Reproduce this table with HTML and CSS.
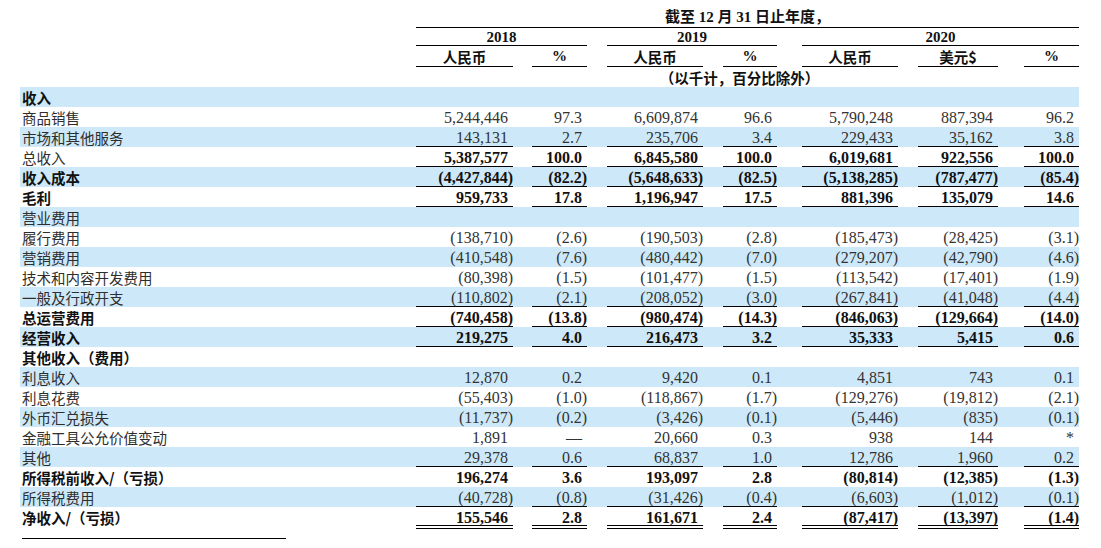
FILE: index.html
```html
<!DOCTYPE html>
<html lang="zh-CN">
<head>
<meta charset="utf-8">
<title>合并经营报表</title>
<link rel="stylesheet" href="styles.css">
</head>
<body>
<div class="page">
  <div class="hd h1"><div class="span-all">截至 12 月 31 日止年度，</div></div>
  <div class="hd h2">
    <div class="y18">2018</div>
    <div class="y19">2019</div>
    <div class="y20">2020</div>
  </div>
  <div class="hd h3">
    <div class="cn">人民币</div><div>%</div>
    <div class="cn">人民币</div><div>%</div>
    <div class="cn">人民币</div><div class="cn">美元$</div><div>%</div>
  </div>
  <div class="hd h4"><div class="span-all unit">（以千计，百分比除外）</div></div>

  <div class="body">
    <div class="row"><div class="lbl lb">收入</div></div>
    <div class="row"><div class="lbl">商品销售</div><div class="v">5,244,446</div><div class="v">97.3</div><div class="v">6,609,874</div><div class="v">96.6</div><div class="v">5,790,248</div><div class="v">887,394</div><div class="v">96.2</div></div>
    <div class="row u"><div class="lbl">市场和其他服务</div><div class="v">143,131</div><div class="v">2.7</div><div class="v">235,706</div><div class="v">3.4</div><div class="v">229,433</div><div class="v">35,162</div><div class="v">3.8</div></div>
    <div class="row u b"><div class="lbl">总收入</div><div class="v">5,387,577</div><div class="v">100.0</div><div class="v">6,845,580</div><div class="v">100.0</div><div class="v">6,019,681</div><div class="v">922,556</div><div class="v">100.0</div></div>
    <div class="row u b"><div class="lbl lb">收入成本</div><div class="v ng">(4,427,844)</div><div class="v ng">(82.2)</div><div class="v ng">(5,648,633)</div><div class="v ng">(82.5)</div><div class="v ng">(5,138,285)</div><div class="v ng">(787,477)</div><div class="v ng">(85.4)</div></div>
    <div class="row u b"><div class="lbl lb">毛利</div><div class="v">959,733</div><div class="v">17.8</div><div class="v">1,196,947</div><div class="v">17.5</div><div class="v">881,396</div><div class="v">135,079</div><div class="v">14.6</div></div>
    <div class="row"><div class="lbl">营业费用</div></div>
    <div class="row"><div class="lbl">履行费用</div><div class="v ng">(138,710)</div><div class="v ng">(2.6)</div><div class="v ng">(190,503)</div><div class="v ng">(2.8)</div><div class="v ng">(185,473)</div><div class="v ng">(28,425)</div><div class="v ng">(3.1)</div></div>
    <div class="row"><div class="lbl">营销费用</div><div class="v ng">(410,548)</div><div class="v ng">(7.6)</div><div class="v ng">(480,442)</div><div class="v ng">(7.0)</div><div class="v ng">(279,207)</div><div class="v ng">(42,790)</div><div class="v ng">(4.6)</div></div>
    <div class="row"><div class="lbl">技术和内容开发费用</div><div class="v ng">(80,398)</div><div class="v ng">(1.5)</div><div class="v ng">(101,477)</div><div class="v ng">(1.5)</div><div class="v ng">(113,542)</div><div class="v ng">(17,401)</div><div class="v ng">(1.9)</div></div>
    <div class="row u"><div class="lbl">一般及行政开支</div><div class="v ng">(110,802)</div><div class="v ng">(2.1)</div><div class="v ng">(208,052)</div><div class="v ng">(3.0)</div><div class="v ng">(267,841)</div><div class="v ng">(41,048)</div><div class="v ng">(4.4)</div></div>
    <div class="row u b"><div class="lbl lb">总运营费用</div><div class="v ng">(740,458)</div><div class="v ng">(13.8)</div><div class="v ng">(980,474)</div><div class="v ng">(14.3)</div><div class="v ng">(846,063)</div><div class="v ng">(129,664)</div><div class="v ng">(14.0)</div></div>
    <div class="row u b"><div class="lbl lb">经营收入</div><div class="v">219,275</div><div class="v">4.0</div><div class="v">216,473</div><div class="v">3.2</div><div class="v">35,333</div><div class="v">5,415</div><div class="v">0.6</div></div>
    <div class="row"><div class="lbl lb">其他收入（费用）</div></div>
    <div class="row"><div class="lbl">利息收入</div><div class="v">12,870</div><div class="v">0.2</div><div class="v">9,420</div><div class="v">0.1</div><div class="v">4,851</div><div class="v">743</div><div class="v">0.1</div></div>
    <div class="row"><div class="lbl">利息花费</div><div class="v ng">(55,403)</div><div class="v ng">(1.0)</div><div class="v ng">(118,867)</div><div class="v ng">(1.7)</div><div class="v ng">(129,276)</div><div class="v ng">(19,812)</div><div class="v ng">(2.1)</div></div>
    <div class="row"><div class="lbl">外币汇兑损失</div><div class="v ng">(11,737)</div><div class="v ng">(0.2)</div><div class="v ng">(3,426)</div><div class="v ng">(0.1)</div><div class="v ng">(5,446)</div><div class="v ng">(835)</div><div class="v ng">(0.1)</div></div>
    <div class="row"><div class="lbl">金融工具公允价值变动</div><div class="v">1,891</div><div class="v">—</div><div class="v">20,660</div><div class="v">0.3</div><div class="v">938</div><div class="v">144</div><div class="v">*</div></div>
    <div class="row u"><div class="lbl">其他</div><div class="v">29,378</div><div class="v">0.6</div><div class="v">68,837</div><div class="v">1.0</div><div class="v">12,786</div><div class="v">1,960</div><div class="v">0.2</div></div>
    <div class="row b"><div class="lbl lb">所得税前收入/（亏损）</div><div class="v">196,274</div><div class="v">3.6</div><div class="v">193,097</div><div class="v">2.8</div><div class="v ng">(80,814)</div><div class="v ng">(12,385)</div><div class="v ng">(1.3)</div></div>
    <div class="row u"><div class="lbl">所得税费用</div><div class="v ng">(40,728)</div><div class="v ng">(0.8)</div><div class="v ng">(31,426)</div><div class="v ng">(0.4)</div><div class="v ng">(6,603)</div><div class="v ng">(1,012)</div><div class="v ng">(0.1)</div></div>
    <div class="row dbl b"><div class="lbl lb">净收入/（亏损）</div><div class="v">155,546</div><div class="v">2.8</div><div class="v">161,671</div><div class="v">2.4</div><div class="v ng">(87,417)</div><div class="v ng">(13,397)</div><div class="v ng">(1.4)</div></div>
  </div>
  <div class="footline"></div>
</div>
</body>
</html>
```
FILE: styles.css
```css
body {
  margin: 0;
  background: #ffffff;
  color: #333333;
  font-family: "Liberation Serif", "Noto Sans CJK SC", serif;
}

.page {
  padding: 7px 0 0 20px;
}

.hd,
.row {
  display: grid;
  grid-template-columns: 396px 97px 19px 55px 20px 96px 20px 54px 25px 96px 20px 80px 26px 55px;
  width: 1059px;
}

/* ---------- header ---------- */
.hd {
  color: #111111;
  font-weight: 700;
  font-size: 15px;
  text-align: center;
}

.hd > div {
  box-sizing: border-box;
  white-space: nowrap;
}

.span-all {
  grid-column: 2 / -1;
}

.h1 > div {
  height: 21px;
  line-height: 20px;
  border-bottom: 1px solid #000000;
  font-size: 15px;
}

.h2 > div {
  height: 18px;
  line-height: 18px;
  border-bottom: 1px solid #000000;
}

.y18 { grid-column: 2 / 5; }
.y19 { grid-column: 6 / 9; }
.y20 { grid-column: 10 / 15; }

.h3 > div {
  height: 21px;
  line-height: 21px;
  border-bottom: 1px solid #000000;
}

.h3 > :nth-child(1) { grid-column: 2; }
.h3 > :nth-child(2) { grid-column: 4; }
.h3 > :nth-child(3) { grid-column: 6; }
.h3 > :nth-child(4) { grid-column: 8; }
.h3 > :nth-child(5) { grid-column: 10; }
.h3 > :nth-child(6) { grid-column: 12; }
.h3 > :nth-child(7) { grid-column: 14; }

.cn {
  font-family: "Noto Sans CJK SC", sans-serif;
  font-size: 14.5px;
}

.cn::first-letter {
  font-size: 14.5px;
}

.h4 > div {
  height: 20px;
  line-height: 21px;
  font-family: "Noto Sans CJK SC", sans-serif;
  font-size: 14.5px;
}

.unit {
  padding-right: 16px;
}

/* ---------- body ---------- */
.row {
  height: 20px;
}

.row:nth-child(odd) {
  background: #cde9f9;
}

.row > div {
  box-sizing: border-box;
  height: 20px;
  line-height: 21px;
  white-space: nowrap;
}

.row > :nth-child(2) { grid-column: 2; }
.row > :nth-child(3) { grid-column: 4; }
.row > :nth-child(4) { grid-column: 6; }
.row > :nth-child(5) { grid-column: 8; }
.row > :nth-child(6) { grid-column: 10; }
.row > :nth-child(7) { grid-column: 12; }
.row > :nth-child(8) { grid-column: 14; }

.lbl {
  font-family: "Noto Sans CJK SC", sans-serif;
  font-size: 14.5px;
  padding-left: 2px;
  color: #2e2e2e;
}

.lb {
  font-weight: 700;
  color: #111111;
}

.v {
  font-size: 16px;
  text-align: right;
  padding-right: 5px;
}

.v.ng {
  padding-right: 0;
}

.b .v {
  font-weight: 700;
  color: #111111;
}

.u .v {
  border-bottom: 1px solid #000000;
}

.dbl {
  height: 22px;
}

.row.dbl > div {
  height: 22px;
}

.dbl .v {
  border-bottom: 4px double #000000;
}

.footline {
  width: 264px;
  margin: 9px 0 0 2px;
  border-top: 1px solid #000000;
}
```
